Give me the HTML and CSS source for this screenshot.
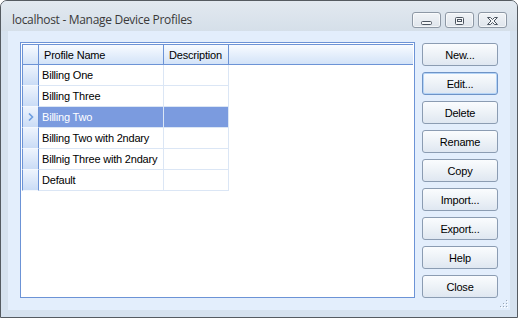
FILE: index.html
```html
<!DOCTYPE html>
<html lang="en">
<head>
    <meta charset="UTF-8">
    <title>localhost - Manage Device Profiles</title>
    <link rel="stylesheet" href="styles.css">
</head>
<body>
    <div class="window">
        <div class="titlebar">
            <span class="title">localhost - Manage Device Profiles</span>
            <div class="caption-buttons">
                <span class="cap-btn">
                    <svg width="27" height="14" viewBox="0 0 27 14"><rect x="8.5" y="8.5" width="10" height="3" rx="1" fill="#f4f6f8" stroke="#4c5560"/></svg>
                </span>
                <span class="cap-btn">
                    <svg width="27" height="14" viewBox="0 0 27 14"><rect x="9.5" y="4.5" width="8" height="7" rx="1" fill="#f4f6f8" stroke="#4c5560"/><rect x="11.5" y="6.5" width="4" height="2" fill="none" stroke="#4c5560"/></svg>
                </span>
                <span class="cap-btn">
                    <svg width="27" height="14" viewBox="0 0 27 14"><path d="M8.5 4.5h3l2 2 2-2h3l-3.5 3.5 3.5 3.5h-3l-2-2-2 2h-3l3.5-3.5z" fill="#f4f6f8" stroke="#4c5560" stroke-linejoin="round"/></svg>
                </span>
            </div>
        </div>

        <div class="client">
            <div class="grid">
                <table>
                    <colgroup>
                        <col class="c-rowhead">
                        <col class="c-name">
                        <col class="c-desc">
                        <col>
                    </colgroup>
                    <thead>
                        <tr>
                            <th class="rowhead"></th>
                            <th>Profile Name</th>
                            <th>Description</th>
                            <th class="filler"></th>
                        </tr>
                    </thead>
                    <tbody>
                        <tr><td class="rowhead"></td><td>Billing One</td><td></td><td class="empty"></td></tr>
                        <tr><td class="rowhead"></td><td>Billing Three</td><td></td><td class="empty"></td></tr>
                        <tr class="selected">
                            <td class="rowhead">
                                <svg width="6" height="8" viewBox="0 0 6 8"><path d="M1 0.5l3.5 3.5-3.5 3.5" fill="none" stroke="#6e9ee0" stroke-width="1.6"/></svg>
                            </td>
                            <td>Billing Two</td><td></td><td class="empty"></td>
                        </tr>
                        <tr><td class="rowhead"></td><td>Billing Two with 2ndary</td><td></td><td class="empty"></td></tr>
                        <tr><td class="rowhead"></td><td>Billnig Three with 2ndary</td><td></td><td class="empty"></td></tr>
                        <tr><td class="rowhead"></td><td>Default</td><td></td><td class="empty"></td></tr>
                    </tbody>
                </table>
            </div>

            <div class="actions">
                <button>New...</button>
                <button class="default">Edit...</button>
                <button>Delete</button>
                <button>Rename</button>
                <button>Copy</button>
                <button>Import...</button>
                <button>Export...</button>
                <button>Help</button>
                <button>Close</button>
            </div>

            <svg class="grip" width="8" height="8" viewBox="0 0 8 8">
                <rect x="6" y="0" width="1" height="1" fill="#9aa6b4"/>
                <rect x="3" y="3" width="1" height="1" fill="#9aa6b4"/>
                <rect x="6" y="3" width="1" height="1" fill="#9aa6b4"/>
                <rect x="0" y="6" width="1" height="1" fill="#9aa6b4"/>
                <rect x="3" y="6" width="1" height="1" fill="#9aa6b4"/>
                <rect x="6" y="6" width="1" height="1" fill="#9aa6b4"/>
                <rect x="7" y="1" width="1" height="1" fill="#fff"/>
                <rect x="4" y="4" width="1" height="1" fill="#fff"/>
                <rect x="7" y="4" width="1" height="1" fill="#fff"/>
                <rect x="1" y="7" width="1" height="1" fill="#fff"/>
                <rect x="4" y="7" width="1" height="1" fill="#fff"/>
                <rect x="7" y="7" width="1" height="1" fill="#fff"/>
            </svg>
        </div>
    </div>
</body>
</html>
```

FILE: styles.css
```css
body {
    margin: 0;
    font-family: "Liberation Sans", Arial, sans-serif;
    font-size: 11px;
    letter-spacing: -0.2px;
    color: #000;
    background: #fff;
}
.window {
    width: 518px;
    height: 318px;
    box-sizing: border-box;
    border: 1px solid #555b61;
    border-radius: 7px 7px 0 0;
    background: #d6e2ef;
    display: flex;
    flex-direction: column;
    overflow: hidden;
}
.titlebar {
    height: 30px;
    box-sizing: border-box;
    padding: 7px 10px 0 11px;
    display: flex;
    align-items: center;
    justify-content: space-between;
    background: linear-gradient(#e2e9f0, #d5dfe9);
}
.title {
    font-family: "Open Sans", sans-serif;
    font-size: 12px;
    color: #3a3a3a;
    letter-spacing: -0.3px;
}
.caption-buttons {
    display: flex;
    gap: 4px;
}
.cap-btn {
    width: 29px;
    height: 16px;
    box-sizing: border-box;
    border: 1px solid #8d98a5;
    border-radius: 3px;
    background: linear-gradient(#f1f4f7, #dfe5ec);
    box-shadow: inset 0 0 0 1px rgba(255, 255, 255, 0.6);
    display: flex;
}
.client {
    flex: 1;
    margin: 0 7px 7px 7px;
    padding: 11px 12px 12px 12px;
    background: #e3eefc;
    display: flex;
    gap: 7px;
    position: relative;
}
/* grid */
.grid {
    flex: 1;
    border: 1px solid #6c93d6;
    padding: 1px;
    background: #fff;
    overflow: hidden;
}
table {
    width: 100%;
    table-layout: fixed;
    border-spacing: 0;
}
.c-rowhead {
    width: 17px;
}
.c-name {
    width: 125px;
}
.c-desc {
    width: 65px;
}
th, td {
    box-sizing: border-box;
    padding: 0 0 0 3px;
    text-align: left;
    font-weight: normal;
    white-space: nowrap;
    overflow: hidden;
}
th {
    height: 21px;
    padding-left: 5px;
    border-top: 1px solid #6c93d6;
    border-right: 1px solid #6c93d6;
    border-bottom: 1px solid #6c93d6;
    background: linear-gradient(#f8fbff, #d3e3f8);
}
th.filler {
    border-right: none;
}
td {
    height: 21px;
    border-right: 1px solid #dbe6f5;
    border-bottom: 1px solid #dbe6f5;
}
td.empty {
    border: none;
}
.rowhead {
    padding: 0;
    border-left: 1px solid #6c93d6;
    border-right: 1px solid #6c93d6;
}
td.rowhead {
    border-bottom: 1px solid #f4f8fe;
    background: linear-gradient(#eef4fd, #cadcf6);
    text-align: center;
    line-height: 0;
}
.selected td {
    background: #7b9bdf;
    color: #fff;
}
.selected td.empty {
    background: none;
}
.selected td.rowhead {
    background: linear-gradient(#eef4fd, #cadcf6);
}
/* buttons */
.actions {
    width: 76px;
    margin-top: 1px;
    display: flex;
    flex-direction: column;
    gap: 6px;
}
button {
    height: 23px;
    padding: 0;
    border: 1px solid #8b9cb2;
    border-radius: 3px;
    background: linear-gradient(#fafcfe, #edf2f7 50%, #dfe7f1);
    font-family: "Liberation Sans", Arial, sans-serif;
    font-size: 11px;
    letter-spacing: -0.2px;
    color: #000;
}
button.default {
    border-color: #6e93c6;
    box-shadow: inset 0 0 0 1px #b4d4f7;
}
.grip {
    position: absolute;
    right: 2px;
    bottom: 2px;
}
```
